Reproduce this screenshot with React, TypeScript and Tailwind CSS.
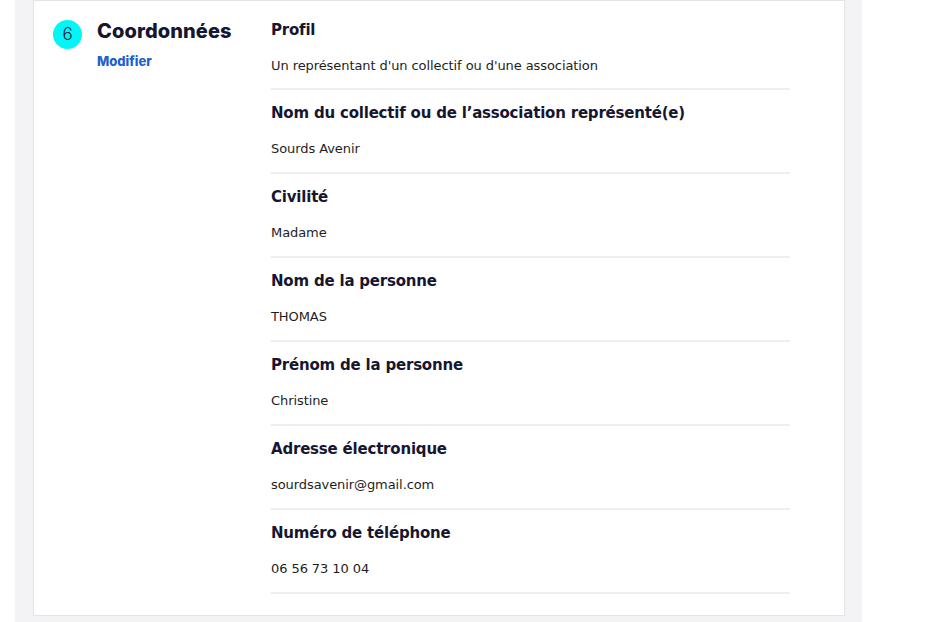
const fields = [
  { label: "Profil", value: "Un représentant d'un collectif ou d'une association" },
  { label: "Nom du collectif ou de l’association représenté(e)", value: "Sourds Avenir" },
  { label: "Civilité", value: "Madame" },
  { label: "Nom de la personne", value: "THOMAS" },
  { label: "Prénom de la personne", value: "Christine" },
  { label: "Adresse électronique", value: "sourdsavenir@gmail.com" },
  { label: "Numéro de téléphone", value: "06 56 73 10 04" },
];

export default function App() {
  return (
    <div className="w-[944px] h-[622px] bg-white overflow-hidden">
      <div className="ml-[15px] w-[847px] h-[622px] bg-[#f3f3f5] pl-[18px] pr-[17px]">
        <div className="h-[616px] bg-white border border-[#e4e4e6] flex pt-[17px]">
          <div className="w-[237px] shrink-0 flex items-start pl-[19px]">
            <div className="mt-[2px] w-[29px] h-[29px] rounded-full bg-[#00f7f7] flex items-center justify-center text-[17px] text-[#161630] font-['Inter',sans-serif] font-light">
              6
            </div>
            <div className="ml-[15px]">
              <div className="-mt-[1px] text-[20px] leading-[28px] font-extrabold text-[#161630] font-['Inter',sans-serif] tracking-[0.1px]">
                Coordonnées
              </div>
              <div className="mt-[8px] text-[13px] leading-[16px] font-extrabold text-[#1f5fcf] font-['Inter',sans-serif]">
                Modifier
              </div>
            </div>
          </div>
          <div className="w-[519px] font-['DejaVu_Sans',sans-serif]">
            {fields.map((f, i) => (
              <div key={i} className={`border-b-2 border-[#eeeef0] ${i === 0 ? "pt-0 pb-[12px]" : "pt-[11px] pb-[13px]"}`}>
                <div className="text-[15px] leading-[24px] font-bold text-[#161630] tracking-[-0.2px]">{f.label}</div>
                <div className="mt-[14px] text-[13px] leading-[20px] text-[#1e1e1e] tracking-[-0.08px]">{f.value}</div>
              </div>
            ))}
          </div>
        </div>
      </div>
    </div>
  );
}
